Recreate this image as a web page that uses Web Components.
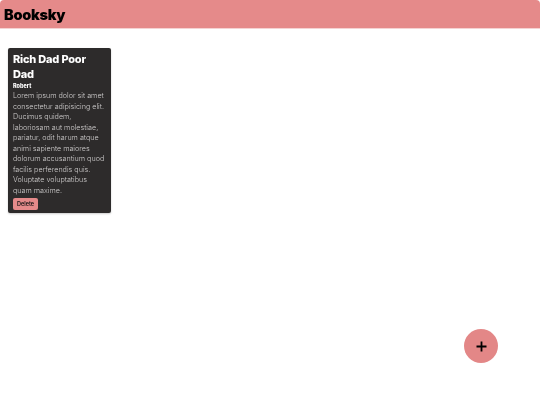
<!DOCTYPE html>
<html>
<head>
<meta charset="utf-8">
<title>Booksky</title>
<style>
  html, body { margin: 0; padding: 0; background: #fff; }
  body { font-family: "Inter", "Liberation Sans", sans-serif; height: 405px; overflow: hidden; }
</style>
</head>
<body>
<book-header>Booksky</book-header>
<book-list>
  <book-card title="Rich Dad Poor Dad" author="Robert">Lorem ipsum dolor sit amet consectetur adipisicing elit. Ducimus quidem, laboriosam aut molestiae, pariatur, odit harum atque animi sapiente maiores dolorum accusantium quod facilis perferendis quis. Voluptate voluptatibus quam maxime.</book-card>
</book-list>
<add-button></add-button>
<script>
class BookHeader extends HTMLElement {
  constructor() {
    super();
    this.attachShadow({ mode: 'open' });
    this.shadowRoot.innerHTML = `
      <style>
        :host {
          display: flex;
          align-items: center;
          height: 28px;
          padding-left: 4px;
          background: #e58a8a;
          color: #000;
          font-size: 14.5px;
          font-weight: 900;
          letter-spacing: -.3px;
          border-radius: 4px 4px 0 0;
          border-bottom: 1px solid #f5d3d3;
        }
        span { will-change: transform; }
      </style>
      <span><slot></slot></span>
    `;
  }
}

class BookList extends HTMLElement {
  constructor() {
    super();
    this.attachShadow({ mode: 'open' });
    this.shadowRoot.innerHTML = `
      <style>
        :host {
          display: flex;
          flex-wrap: wrap;
          align-items: flex-start;
          padding: 19px 8px;
        }
      </style>
      <slot></slot>
    `;
  }
}

class BookCard extends HTMLElement {
  constructor() {
    super();
    this.attachShadow({ mode: 'open' });
  }

  connectedCallback() {
    this.shadowRoot.innerHTML = `
      <style>
        :host {
          display: block;
          box-sizing: border-box;
          width: 103px;
          height: 165px;
          padding: 4px 5px;
          background: #2d2b2b;
          border-radius: 2px;
          color: #fff;
          box-shadow: 0 1px 2px rgba(0,0,0,.2);
        }
        .text { will-change: transform; }
        h2 { margin: 0; font-size: 11px; line-height: 15px; font-weight: 800; letter-spacing: -.2px; }
        h3 { margin: 0; font-size: 5.5px; line-height: 9px; font-weight: 800; }
        p { margin: 0; font-size: 7.2px; line-height: 10.5px; font-weight: 300; color: #cfcdcd; }
        button {
          display: block;
          margin-top: 1.5px;
          padding: 0;
          width: 25px;
          height: 12px;
          border: 0;
          border-radius: 2px;
          background: #e58a8a;
          color: #111;
          font: 600 5.5px "Inter", sans-serif;
          will-change: transform;
        }
      </style>
      <div class="text">
        <h2>${this.getAttribute('title')}</h2>
        <h3>${this.getAttribute('author')}</h3>
        <p><slot></slot></p>
      </div>
      <button>Delete</button>
    `;
  }
}

class AddButton extends HTMLElement {
  constructor() {
    super();
    this.attachShadow({ mode: 'open' });
    this.shadowRoot.innerHTML = `
      <style>
        :host {
          position: fixed;
          left: 464px;
          top: 329px;
          width: 34px;
          height: 34px;
          display: flex;
          align-items: center;
          justify-content: center;
          border-radius: 50%;
          background: #e38787;
        }
        svg { display: block; }
      </style>
      <svg width="11" height="11" viewBox="0 0 11 11"><path d="M5.5 0.5v10M0.5 5.5h10" stroke="#000" stroke-width="1.8" fill="none"/></svg>
    `;
  }
}

customElements.define('book-header', BookHeader);
customElements.define('book-list', BookList);
customElements.define('book-card', BookCard);
customElements.define('add-button', AddButton);
</script>
</body>
</html>
